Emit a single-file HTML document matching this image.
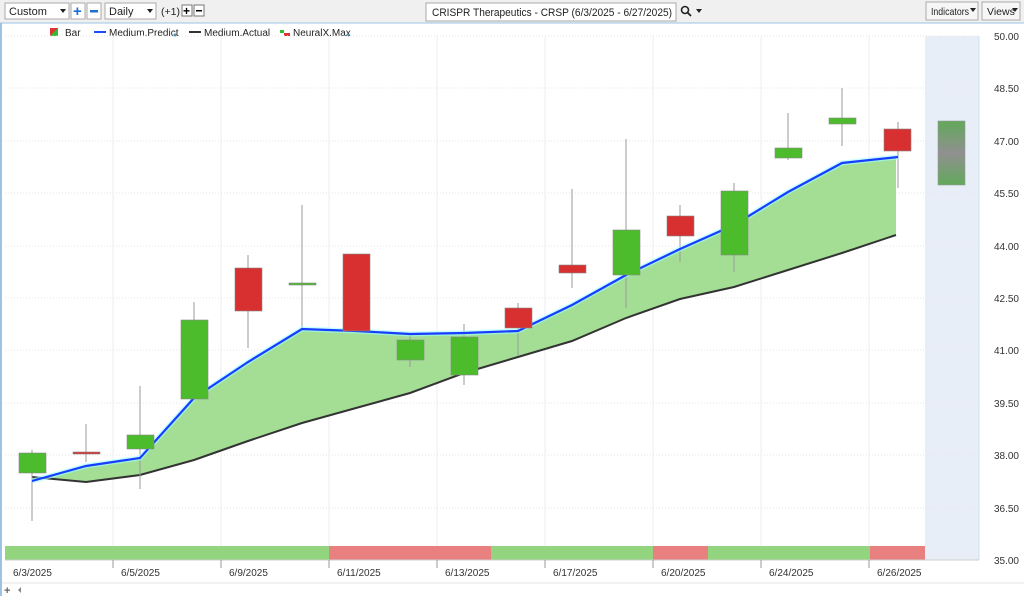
<!DOCTYPE html><html><head><style>
body{margin:0;width:1024px;height:596px;overflow:hidden;background:#fff;font-family:"Liberation Sans",sans-serif;}
</style></head><body>
<svg width="1024" height="596" xmlns="http://www.w3.org/2000/svg" font-family="Liberation Sans, sans-serif">
<rect x="0" y="0" width="1024" height="23" fill="#f0f0f0"/>
<line x1="0" y1="23" x2="1024" y2="23" fill="none" stroke="#9cc3e6"/>
<rect x="0" y="23" width="2" height="573" fill="#9cc3e6"/>
<!-- toolbar -->
<rect x="5" y="3" width="64" height="16" fill="#fff" stroke="#aaa"/><text x="9" y="15" font-size="11" fill="#222">Custom</text><path d="M60 9h6l-3 4z" fill="#222"/>
<rect x="71" y="3" width="14" height="16" fill="#fff" stroke="#aaa"/><text x="73" y="16" font-size="15" font-weight="bold" fill="#1a6fd0">+</text>
<rect x="87" y="3" width="14" height="16" fill="#fff" stroke="#aaa"/><rect x="90" y="10" width="8" height="2.5" fill="#1a6fd0"/>
<rect x="105" y="3" width="51" height="16" fill="#fff" stroke="#aaa"/><text x="109" y="15" font-size="11" fill="#222">Daily</text><path d="M147 9h6l-3 4z" fill="#222"/>
<text x="161" y="15" font-size="10.5" fill="#222">(+1)</text>
<rect x="182" y="5" width="10" height="11" fill="#fff" stroke="#777"/><text x="183" y="15" font-size="12" font-weight="bold">+</text>
<rect x="194" y="5" width="10" height="11" fill="#fff" stroke="#777"/><rect x="196" y="10" width="6" height="1.5" fill="#000"/>
<rect x="426" y="3" width="250" height="18" fill="#fff" stroke="#aaa"/><text x="432" y="16" font-size="11" fill="#222" textLength="240" lengthAdjust="spacingAndGlyphs">CRISPR Therapeutics - CRSP (6/3/2025 - 6/27/2025)</text>
<circle cx="685" cy="10" r="3.5" fill="none" stroke="#222" stroke-width="1.6"/><line x1="687.5" y1="12.5" x2="691" y2="16" stroke="#222" stroke-width="1.8"/><path d="M696 9h6l-3 4z" fill="#222"/>
<rect x="926" y="2" width="52" height="18" fill="#f6f6f6" stroke="#aaa"/><text x="931" y="15" font-size="10.5" fill="#222" textLength="38" lengthAdjust="spacingAndGlyphs">Indicators</text><path d="M970 8h6l-3 4z" fill="#222"/>
<rect x="982" y="2" width="38" height="18" fill="#f6f6f6" stroke="#aaa"/><text x="987" y="15" font-size="10.5" fill="#222">Views</text><path d="M1012 8h6l-3 4z" fill="#222"/>
<!-- legend -->
<path d="M50 28h8v8h-8z" fill="#d33"/><path d="M50 36l8-8v8z" fill="#3b3"/><text x="65" y="36" font-size="10" fill="#222">Bar</text>
<rect x="94" y="31" width="12" height="2" fill="#1a4dff"/><text x="109" y="36" font-size="10" fill="#222">Medium.Predict</text><circle cx="175" cy="35" r="1.5" fill="#4a90b0"/>
<rect x="189" y="31" width="12" height="2" fill="#333"/><text x="204" y="36" font-size="10" fill="#222">Medium.Actual</text>
<path d="M280 30h4v3h6v3h-6v-3h-4z" fill="#d33"/><rect x="280" y="30" width="4" height="3" fill="#3b3"/><text x="293" y="36" font-size="10" fill="#222">NeuralX.Max</text><circle cx="348" cy="35" r="1.5" fill="#4a90b0"/>
<!-- forecast shade -->
<rect x="925" y="36" width="54" height="524" fill="#e8eef7"/>
<g stroke="#e6e6e6" stroke-dasharray="1 2">
<line x1="5" y1="36" x2="979" y2="36"/><line x1="5" y1="88" x2="979" y2="88"/><line x1="5" y1="141" x2="979" y2="141"/><line x1="5" y1="193" x2="979" y2="193"/><line x1="5" y1="246" x2="979" y2="246"/><line x1="5" y1="298" x2="979" y2="298"/><line x1="5" y1="350" x2="979" y2="350"/><line x1="5" y1="403" x2="979" y2="403"/><line x1="5" y1="455" x2="979" y2="455"/><line x1="5" y1="508" x2="979" y2="508"/>
</g>
<g stroke="#ececec"><line x1="113" y1="36" x2="113" y2="560"/><line x1="221" y1="36" x2="221" y2="560"/><line x1="329" y1="36" x2="329" y2="560"/><line x1="437" y1="36" x2="437" y2="560"/><line x1="545" y1="36" x2="545" y2="560"/><line x1="653" y1="36" x2="653" y2="560"/><line x1="761" y1="36" x2="761" y2="560"/><line x1="869" y1="36" x2="869" y2="560"/></g>
<line x1="979" y1="36" x2="979" y2="560" stroke="#cfe0f0"/>
<!-- fill -->
<polygon fill="#9fdc8f" opacity="0.95" points="32,481 86,466 140,458 194,398 248,362 302,329 356,331 410,334 464,333 518,331 572,305 626,275 680,249 734,225 788,192 842,163 896,157 896,235 842,253 788,270 734,287 680,299 626,318 572,341 518,357 464,373 410,393 356,408 302,423 248,441 194,460 140,475 86,482 32,477"/>
<polyline fill="none" stroke="#333" stroke-width="2" points="32,477 86,482 140,475 194,460 248,441 302,423 356,408 410,393 464,373 518,357 572,341 626,318 680,299 734,287 788,270 842,253 896,235"/>
<!-- wicks -->
<g stroke="#999" stroke-width="1">
<line x1="32" y1="450" x2="32" y2="521"/><line x1="86" y1="424" x2="86" y2="462"/><line x1="140" y1="386" x2="140" y2="489"/><line x1="194" y1="302" x2="194" y2="400"/><line x1="248" y1="255" x2="248" y2="348"/><line x1="302" y1="205" x2="302" y2="330"/><line x1="356" y1="254" x2="356" y2="331"/><line x1="410" y1="335" x2="410" y2="367"/><line x1="464" y1="324" x2="464" y2="385"/><line x1="518" y1="303" x2="518" y2="356"/><line x1="572" y1="189" x2="572" y2="288"/><line x1="626" y1="139" x2="626" y2="308"/><line x1="680" y1="205" x2="680" y2="262"/><line x1="734" y1="183" x2="734" y2="272"/><line x1="788" y1="113" x2="788" y2="160"/><line x1="842" y1="88" x2="842" y2="146"/><line x1="898" y1="122" x2="898" y2="188"/>
</g>
<polyline fill="none" stroke="#9ff" stroke-width="5" opacity="0.6" points="32,481 86,466 140,458 194,398 248,362 302,329 356,331 410,334 464,333 518,331 572,305 626,275 680,249 734,225 788,192 842,163 898,157"/>
<polyline fill="none" stroke="#1a3cff" stroke-width="2.2" points="32,481 86,466 140,458 194,398 248,362 302,329 356,331 410,334 464,333 518,331 572,305 626,275 680,249 734,225 788,192 842,163 898,157"/>
<!-- bodies -->
<g stroke="#888" stroke-width="0.6">
<rect x="19" y="453" width="27" height="20" fill="#4cbb2c"/><rect x="73" y="452" width="27" height="2" fill="#d83030"/><rect x="127" y="435" width="27" height="14" fill="#4cbb2c"/><rect x="181" y="320" width="27" height="79" fill="#4cbb2c"/><rect x="235" y="268" width="27" height="43" fill="#d83030"/><rect x="289" y="283" width="27" height="2" fill="#4cbb2c"/><rect x="343" y="254" width="27" height="77" fill="#d83030"/><rect x="397" y="340" width="27" height="20" fill="#4cbb2c"/><rect x="451" y="337" width="27" height="38" fill="#4cbb2c"/><rect x="505" y="308" width="27" height="20" fill="#d83030"/><rect x="559" y="265" width="27" height="8" fill="#d83030"/><rect x="613" y="230" width="27" height="45" fill="#4cbb2c"/><rect x="667" y="216" width="27" height="20" fill="#d83030"/><rect x="721" y="191" width="27" height="64" fill="#4cbb2c"/><rect x="775" y="148" width="27" height="10" fill="#4cbb2c"/><rect x="829" y="118" width="27" height="6" fill="#4cbb2c"/><rect x="884" y="129" width="27" height="22" fill="#d83030"/>
</g>
<defs><linearGradient id="g" x1="0" y1="0" x2="0" y2="1"><stop offset="0" stop-color="#62a85a"/><stop offset="0.5" stop-color="#909090"/><stop offset="1" stop-color="#62a85a"/></linearGradient></defs>
<rect x="938" y="121" width="27" height="64" fill="url(#g)" stroke="#999" stroke-width="0.6"/>
<!-- bottom bar -->
<rect x="5" y="546" width="324" height="14" fill="#93d57f"/><rect x="329" y="546" width="162" height="14" fill="#e88080"/><rect x="491" y="546" width="162" height="14" fill="#93d57f"/><rect x="653" y="546" width="55" height="14" fill="#e88080"/><rect x="708" y="546" width="162" height="14" fill="#93d57f"/><rect x="870" y="546" width="55" height="14" fill="#e88080"/>
<line x1="5" y1="560" x2="979" y2="560" stroke="#ccc"/>
<!-- axis -->
<g font-size="10" fill="#333" text-anchor="end">
<text x="1019" y="40">50.00</text><text x="1019" y="92">48.50</text><text x="1019" y="145">47.00</text><text x="1019" y="197">45.50</text><text x="1019" y="250">44.00</text><text x="1019" y="302">42.50</text><text x="1019" y="354">41.00</text><text x="1019" y="407">39.50</text><text x="1019" y="459">38.00</text><text x="1019" y="512">36.50</text><text x="1019" y="564">35.00</text>
</g>
<g stroke="#999"><line x1="113" y1="560" x2="113" y2="568"/><line x1="221" y1="560" x2="221" y2="568"/><line x1="329" y1="560" x2="329" y2="568"/><line x1="437" y1="560" x2="437" y2="568"/><line x1="545" y1="560" x2="545" y2="568"/><line x1="653" y1="560" x2="653" y2="568"/><line x1="761" y1="560" x2="761" y2="568"/><line x1="869" y1="560" x2="869" y2="568"/></g>
<g font-size="10" fill="#333">
<text x="13" y="576">6/3/2025</text><text x="121" y="576">6/5/2025</text><text x="229" y="576">6/9/2025</text><text x="337" y="576">6/11/2025</text><text x="445" y="576">6/13/2025</text><text x="553" y="576">6/17/2025</text><text x="661" y="576">6/20/2025</text><text x="769" y="576">6/24/2025</text><text x="877" y="576">6/26/2025</text>
</g>
<line x1="2" y1="583" x2="1024" y2="583" stroke="#e4e4e4"/>
<text x="4" y="594" font-size="11" font-weight="bold" fill="#666">+</text><path d="M21 587v6l-3-3z" fill="#888"/>
</svg>
</body></html>
